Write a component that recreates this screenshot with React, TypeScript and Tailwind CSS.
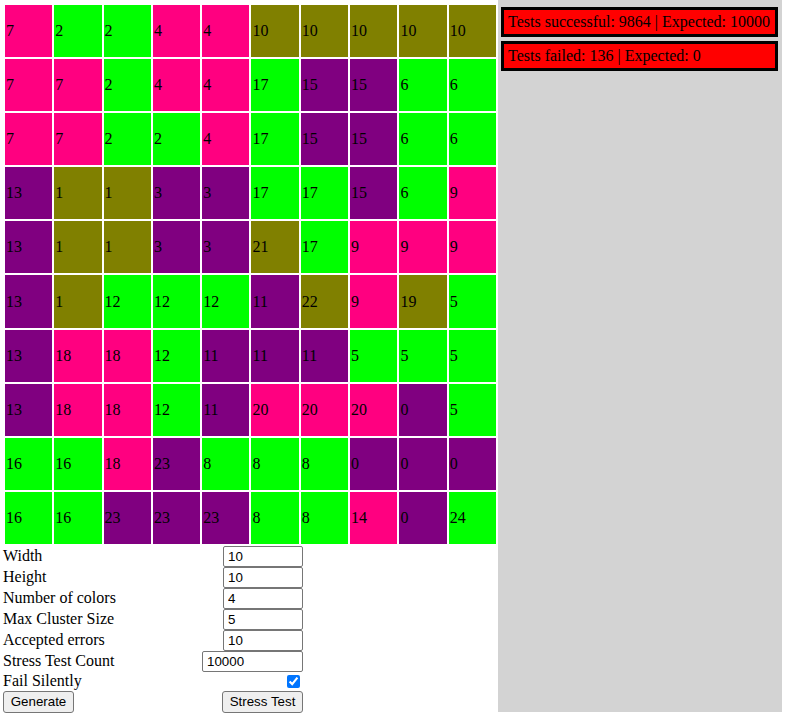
import React from "react";

const P = "p", G = "g", O = "o", U = "u";

const grid: [number, string][][] = [
  [[7,P],[2,G],[2,G],[4,P],[4,P],[10,O],[10,O],[10,O],[10,O],[10,O]],
  [[7,P],[7,P],[2,G],[4,P],[4,P],[17,G],[15,U],[15,U],[6,G],[6,G]],
  [[7,P],[7,P],[2,G],[2,G],[4,P],[17,G],[15,U],[15,U],[6,G],[6,G]],
  [[13,U],[1,O],[1,O],[3,U],[3,U],[17,G],[17,G],[15,U],[6,G],[9,P]],
  [[13,U],[1,O],[1,O],[3,U],[3,U],[21,O],[17,G],[9,P],[9,P],[9,P]],
  [[13,U],[1,O],[12,G],[12,G],[12,G],[11,U],[22,O],[9,P],[19,O],[5,G]],
  [[13,U],[18,P],[18,P],[12,G],[11,U],[11,U],[11,U],[5,G],[5,G],[5,G]],
  [[13,U],[18,P],[18,P],[12,G],[11,U],[20,P],[20,P],[20,P],[0,U],[5,G]],
  [[16,G],[16,G],[18,P],[23,U],[8,G],[8,G],[8,G],[0,U],[0,U],[0,U]],
  [[16,G],[16,G],[23,U],[23,U],[23,U],[8,G],[8,G],[14,P],[0,U],[24,G]],
];

const bg: Record<string, string> = {
  p: "bg-[#ff0080]",
  g: "bg-[#00ff00]",
  o: "bg-[#808000]",
  u: "bg-[#800080]",
};

const inputCls =
  "h-[21px] border border-[#767676] rounded-[2px] px-[4px] bg-white text-black text-[13.33px] font-['Liberation_Sans',Arial,sans-serif] outline-none";

const btnCls =
  "h-[22px] border border-[#767676] rounded-[3px] bg-[#efefef] px-[6px] text-black text-[13.33px] font-['Liberation_Sans',Arial,sans-serif] leading-none";

function Row({ label, children }: { label: string; children: React.ReactNode }) {
  return (
    <div className="flex justify-between items-center h-[21px]">
      <span className="leading-[18px]">{label}</span>
      {children}
    </div>
  );
}

export default function App() {
  return (
    <div className="flex items-start bg-white font-['Liberation_Serif','Times_New_Roman',serif] text-[16px] text-black w-[785px] h-[718px]">
      <div className="pl-[3px] pt-[3px] w-[498px]">
        <div className="grid grid-cols-[repeat(10,47.3px)] auto-rows-[52.1px] gap-[2px] p-[2px]">
          {grid.flat().map(([n, c], i) => (
            <div key={i} className={`${bg[c]} flex items-center pl-[1px] leading-[18px]`}>
              {n}
            </div>
          ))}
        </div>
        <div className="w-[300px]">
          <Row label="Width">
            <input className={`${inputCls} w-[80px]`} defaultValue="10" />
          </Row>
          <Row label="Height">
            <input className={`${inputCls} w-[80px]`} defaultValue="10" />
          </Row>
          <Row label="Number of colors">
            <input className={`${inputCls} w-[80px]`} defaultValue="4" />
          </Row>
          <Row label="Max Cluster Size">
            <input className={`${inputCls} w-[80px]`} defaultValue="5" />
          </Row>
          <Row label="Accepted errors">
            <input className={`${inputCls} w-[80px]`} defaultValue="10" />
          </Row>
          <Row label="Stress Test Count">
            <input className={`${inputCls} w-[101px]`} defaultValue="10000" />
          </Row>
          <div className="flex justify-between items-center h-[19px]">
            <span className="leading-[18px]">Fail Silently</span>
            <input type="checkbox" defaultChecked className="w-[13px] h-[13px] mr-[3px] accent-[#0075ff]" />
          </div>
          <div className="flex justify-between items-center h-[22px]">
            <button className={`${btnCls} w-[71px]`}>Generate</button>
            <button className={`${btnCls} w-[81px]`}>Stress Test</button>
          </div>
        </div>
      </div>
      <div className="w-[284px] h-[712px] bg-[#d3d3d3] flex flex-col gap-[4px] pl-[3px] pr-[4px] pt-[7px]">
        <div className="bg-[#ff0000] border-[3px] border-black px-[4px] py-[3px] leading-[18px]">
          Tests successful: 9864 | Expected: 10000
        </div>
        <div className="bg-[#ff0000] border-[3px] border-black px-[4px] py-[3px] leading-[18px]">
          Tests failed: 136 | Expected: 0
        </div>
      </div>
    </div>
  );
}
